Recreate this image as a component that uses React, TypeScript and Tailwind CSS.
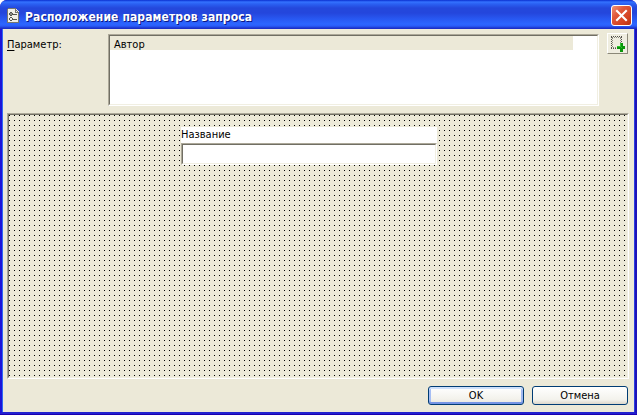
import React from 'react';

function Bevel({ className = '', children }: { className?: string; children?: React.ReactNode }) {
  return (
    <div className={`border border-t-[#aca899] border-l-[#aca899] border-r-white border-b-white ${className}`}>
      <div className="h-full w-full border border-t-[#716f64] border-l-[#716f64] border-r-[#f1efe2] border-b-[#f1efe2]">
        {children}
      </div>
    </div>
  );
}

function FormIcon() {
  return (
    <svg width="16" height="16" viewBox="0 0 16 16" shapeRendering="crispEdges">
      <path d="M2 1h8l3 3v11H2z" fill="#f0eee6" />
      <path d="M1 1h1v14H1zM2 0h8v1H2zM2 14h11v1H2zM12 4h1v11h-1zM9 1h1v3H9zM10 2h1v1h-1zM11 3h1v1h-1zM9 4h3v1H9z" fill="#77776f" />
      <path d="M4 4h2v1H4zM3 5h1v2H3zM6 5h1v2H6zM4 7h2v1H4zM4 9h2v1H4zM3 10h1v2H3zM6 10h1v2H6zM4 12h2v1H4z" fill="#55554f" />
      <path d="M4 5h2v2H4z" fill="#8a8a82" />
      <path d="M7 6h4v1H7zM7 11h4v1H7z" fill="#55554f" />
    </svg>
  );
}

function AddFieldIcon() {
  return (
    <svg width="15" height="17" viewBox="0 0 15 17" shapeRendering="crispEdges">
      <path
        d="M1 1.5H12M1.5 2V14M11.5 2V8M1 13.5H7"
        stroke="#55534c"
        strokeDasharray="1 1"
        fill="none"
      />
      <path
        d="M2 2.5H11M2.5 3V13M10.5 3V8M3 12.5H7"
        stroke="#8c8a80"
        strokeDasharray="1 1"
        fill="none"
      />
      <path d="M10 8h3v3h2v3h-2v3h-3v-3H7v-3h3z" fill="#0a960a" />
      <path d="M10 8h1v4h-1zM7 11h4v1H7zM11 12h1v1h-1z" fill="#2fc42f" />
    </svg>
  );
}

export default function App() {
  return (
    <div className="flex h-[415px] w-[637px] flex-col overflow-hidden rounded-t-[7px] bg-[#1b00b0] pb-px font-['DejaVu_Sans_Condensed','Liberation_Sans',sans-serif] text-[11px] text-black">
      <header className="flex h-[29px] shrink-0 items-center bg-[linear-gradient(180deg,#0a2fd0_0px,#3472ff_2px,#2a60f2_4px,#2448dc_8px,#2446dc_13px,#2858f2_19px,#2c66ff_24px,#2a5cf8_26px,#1c36cc_28px,#1c28c4_29px)] pr-[5px] pl-[6px]">
        <div className="mt-[3px]">
          <FormIcon />
        </div>
        <h1 className="mt-[4px] ml-[3px] flex-1 text-[12px] leading-4 font-bold tracking-[0.11px] whitespace-nowrap text-white [text-shadow:1px_1px_0_#0a1883]">
          Расположение параметров запроса
        </h1>
        <button className="mt-[2px] flex h-[21px] w-[21px] items-center justify-center rounded-[3px] border border-white bg-[linear-gradient(135deg,#f09478,#e0583a_35%,#d2401e_75%,#b53210)]">
          <svg width="13" height="13" viewBox="0 0 13 13">
            <path d="M2 2l9 9M11 2l-9 9" stroke="#fff" strokeWidth="2.1" strokeLinecap="square" />
          </svg>
        </button>
      </header>

      <div className="flex flex-1 border-r-2 border-b-2 border-l-2 border-r-[#1c12b8] border-b-[#2222d0] border-l-[#1c14d8]">
        <main className="flex flex-1 flex-col border-r border-l border-r-[#2a3ee0] border-l-[#2e68f4] bg-[#ece9d8] pl-1">
          <section className="flex h-[84px] pt-[4px]">
            <label className="mt-[4px] w-[101px] leading-[15px]">
              <span className="underline underline-offset-2">П</span>араметр:
            </label>
            <Bevel className="mt-px h-[72px] w-[491px] bg-white">
              <div className="h-[14px] w-[463px] bg-[#ece9d8] pl-1 leading-[17px]">Автор</div>
            </Bevel>
            <button className="ml-2 flex h-[21px] w-[21px] items-center justify-center border border-t-white border-r-[#8b8878] border-b-[#8b8878] border-l-white bg-[#efede0]">
              <AddFieldIcon />
            </button>
          </section>

          <Bevel className="h-[266px] w-[622px]">
            <div className="h-full w-full bg-[linear-gradient(90deg,transparent_1px,#ece9d8_1px),linear-gradient(180deg,#000_1px,transparent_1px)] bg-[length:5px_5px] pt-3 pl-[172px]">
              <div className="h-[16px] w-[256px] bg-white leading-[15px]">Название</div>
              <Bevel className="h-[22px] w-[256px] bg-white" />
            </div>
          </Bevel>

          <footer className="flex gap-2 pt-[7px] pl-[421px]">
            <button className="h-[19px] w-[96px] rounded-[3px] border border-[#003c74] bg-[linear-gradient(180deg,#fff,#f3f2ec_70%,#e8e5dc)] leading-[17px] shadow-[inset_0_2px_0_#cee0fb,inset_0_-2px_0_#7594e4,inset_2px_0_0_#a6bef4,inset_-2px_0_0_#a0b8f0]">
              OK
            </button>
            <button className="h-[19px] w-[96px] rounded-[3px] border border-[#003c74] bg-[linear-gradient(180deg,#fff,#f3f2ec_75%,#dcd7cb)] leading-[17px]">
              Отмена
            </button>
          </footer>
        </main>
      </div>
    </div>
  );
}
